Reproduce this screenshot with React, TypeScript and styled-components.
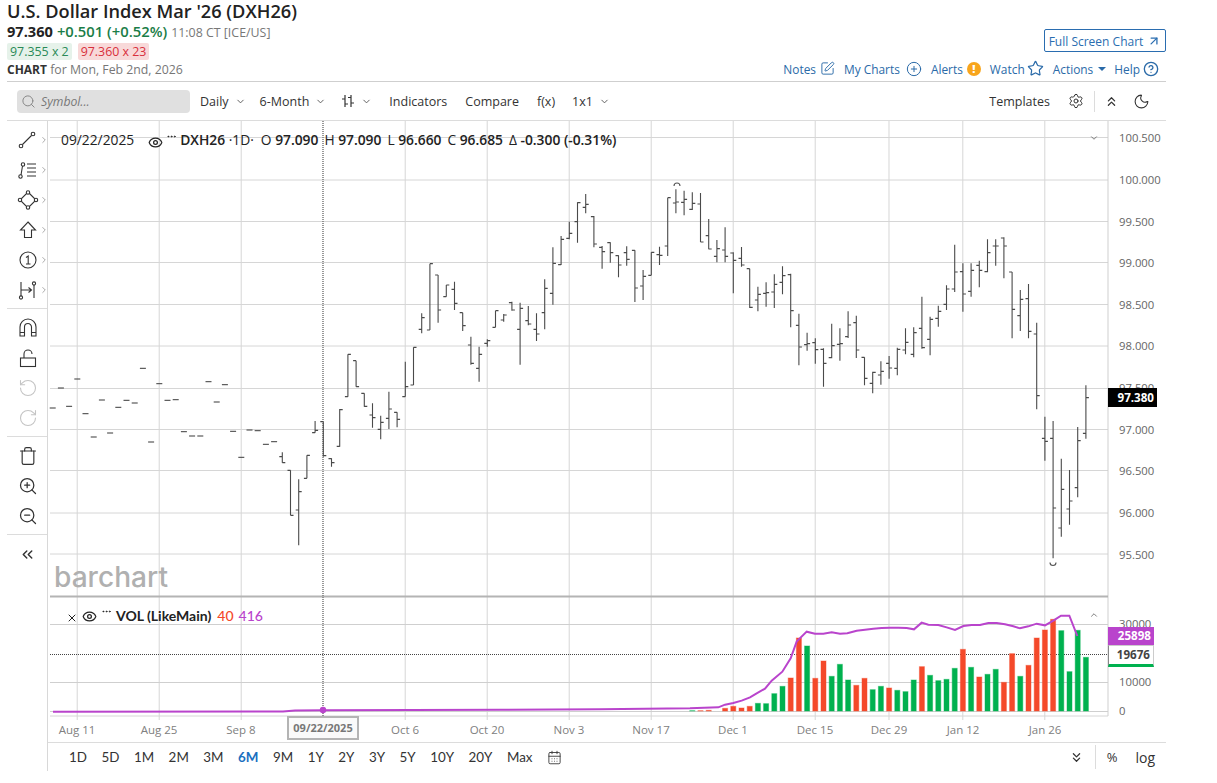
import React from "react";
import styled, { createGlobalStyle } from "styled-components";
import {
  ArrowUpRight, CalendarDays, ChevronDown, ChevronRight, ChevronUp, ChevronsDown, ChevronsLeft, ChevronsUp,
  CircleHelp, CirclePlus, Ellipsis, Eye, Moon, RotateCcw, RotateCw, Search, Settings, SquarePen, Star, Trash, X, ZoomIn, ZoomOut,
} from "lucide-react";

const Global = createGlobalStyle`
  html, body { margin: 0; padding: 0; background: #fff; }
  body { font-family: "Open Sans", "Liberation Sans", sans-serif; color: #333; }
`;

const Page = styled.div`
  width: 1159px;
  margin-left: 7px;
  height: 783px;
  display: flex;
  flex-direction: column;
`;
const Header = styled.header`
  height: 81px;
  border-bottom: 1px solid #cfcfcf;
  display: flex;
  justify-content: space-between;
  flex: none;
`;
const Quote = styled.div`display: flex; flex-direction: column;`;
const Title = styled.h1`
  margin: 0;
  font-size: 18.2px;
  line-height: 23px;
  font-weight: 600;
  color: #222;
`;
const PriceRow = styled.div`display: flex; align-items: baseline; gap: 4px; height: 20px; line-height: 17px;`;
const Last = styled.b`font-size: 14.6px; font-weight: 700; color: #222;`;
const Change = styled.b`font-size: 14.8px; font-weight: 600; color: #1a7d47;`;
const Stamp = styled.span`font-size: 12.4px; color: #777;`;
const Badges = styled.div`display: flex; gap: 6px; height: 17px;`;
const Badge = styled.span<{ $tone: "bid" | "ask" }>`
  font-size: 12.4px;
  line-height: 17px;
  padding: 0 3px;
  border-radius: 2px;
  background: ${(p) => (p.$tone === "bid" ? "#e6f2ea" : "#f8d9d9")};
  color: ${(p) => (p.$tone === "bid" ? "#2a8a57" : "#d8303c")};
`;
const ChartFor = styled.div`font-size: 12.3px; line-height: 20px; color: #777;`;
const ChartWord = styled.b`font-size: 12px; font-weight: 700; color: #333;`;

const HeaderRight = styled.div`display: flex; flex-direction: column; align-items: flex-end; padding-top: 29px;`;
const FullButton = styled.a`
  box-sizing: border-box;
  width: 122px;
  height: 23px;
  padding-top: 1px;
  border: 1px solid #2a6db0;
  border-radius: 2px;
  display: flex;
  align-items: center;
  justify-content: center;
  gap: 4px;
  font-size: 12px;
  color: #2a6db0;
`;
const Nav = styled.nav`display: flex; align-items: center; gap: 9px; margin-top: 7px; padding-right: 7px; height: 19px;`;
const NavItem = styled.a<{ $gap?: number; $ml?: number }>`
  display: flex;
  align-items: center;
  gap: ${(p) => p.$gap ?? 4}px;
  margin-left: ${(p) => p.$ml ?? 0}px;
  font-size: 11.9px;
  color: #2a6aa8;
`;
const AlertDot = styled.span`
  width: 14px;
  height: 14px;
  border-radius: 50%;
  background: #f8a51c;
  color: #fff;
  font-size: 11px;
  font-weight: 800;
  line-height: 14px;
  text-align: center;
`;
const Caret = styled.span`
  width: 0;
  height: 0;
  margin-left: 1px;
  border-left: 4px solid transparent;
  border-right: 4px solid transparent;
  border-top: 4px solid #2a6aa8;
`;

const Toolbar = styled.div`
  height: 38px;
  border-bottom: 1px solid #dcdcdc;
  display: flex;
  align-items: center;
  justify-content: space-between;
  padding: 0 16px 0 10px;
  flex: none;
`;
const ToolGroup = styled.div`display: flex; align-items: center; gap: 14px;`;
const SearchBox = styled.div`
  width: 173px;
  height: 23px;
  box-sizing: border-box;
  border-radius: 4px;
  background: #e0e0e0;
  display: flex;
  align-items: center;
  gap: 5px;
  padding-left: 4px;
  margin-right: -4px;
  font-size: 12.2px;
  font-style: italic;
  color: #777;
`;
const ToolItem = styled.span<{ $ml?: number; $mr?: number }>`
  display: flex;
  align-items: center;
  gap: 6px;
  margin-left: ${(p) => p.$ml ?? 0}px;
  margin-right: ${(p) => p.$mr ?? 0}px;
  font-size: 12.5px;
  color: #333;
`;
const VRule = styled.span`width: 1px; height: 21px; background: #dcdcdc; margin: 0 -5px 0 -4px;`;

const Body = styled.div`display: flex; flex: none; height: 650px;`;
const Rail = styled.aside`
  width: 40px;
  flex: none;
  border-right: 1px solid #d8d8d8;
  display: flex;
  flex-direction: column;
  padding-top: 4px;
`;
const RailGroup = styled.div`
  display: flex;
  flex-direction: column;
  padding-bottom: 3px;
  margin-bottom: 4px;
  border-bottom: 1px solid #dcdcdc;
  &:last-child { border-bottom: 0; }
`;
const RailBtn = styled.div<{ $dim?: boolean }>`
  height: 30px;
  display: flex;
  align-items: center;
  justify-content: center;
  padding-left: 1px;
  position: relative;
  color: ${(p) => (p.$dim ? "#c4c4c4" : "#333")};
`;
const RailMore = styled.span`position: absolute; left: 32px; top: 10px; color: #9a9a9a; display: flex;`;

const Main = styled.div`flex: 1; display: flex; flex-direction: column; min-width: 0;`;
const ChartBox = styled.div`position: relative; height: 621px; flex: none;`;
const ChartSvg = styled.svg`display: block;`;
const AxisText = styled.text`font-family: "Open Sans", sans-serif; font-size: 11.3px; fill: #666;`;
const DateText = styled.text`font-family: "Open Sans", sans-serif; font-size: 11.5px; fill: #808080; text-anchor: middle;`;
const Logo = styled.text`font-family: "Inter", sans-serif; font-size: 28px; font-weight: 500; fill: #b0b0b0;`;

const Legend = styled.div<{ $top: number; $left: number }>`
  position: absolute;
  top: ${(p) => p.$top}px;
  left: ${(p) => p.$left}px;
  height: 18px;
  display: flex;
  align-items: center;
  white-space: nowrap;
  font-size: 13.8px;
  color: #222;
`;
const LegendB = styled.b<{ $gap?: number }>`font-weight: 600; margin-left: ${(p) => p.$gap ?? 0}px;`;
const LegendT = styled.span<{ $gap?: number }>`margin-left: ${(p) => p.$gap ?? 0}px;`;
const LegendIcon = styled.span<{ $gap?: number; $shift?: number }>`
  display: flex;
  margin-left: ${(p) => p.$gap ?? 0}px;
  transform: translateY(${(p) => p.$shift ?? 0}px);
`;
const VolName = styled.b`font-family: "Lato", sans-serif; font-size: 14px; font-weight: 700; margin-left: 4px;`;
const VolValue = styled.span<{ $color: string; $gap: number }>`
  font-family: "Lato", sans-serif;
  font-size: 14px;
  font-weight: 500;
  margin-left: ${(p) => p.$gap}px;
  color: ${(p) => p.$color};
`;
const Tag = styled.div<{ $top: number; $height: number; $bg: string; $fg: string; $w: number; $edge?: string }>`
  position: absolute;
  left: 1060px;
  top: ${(p) => p.$top}px;
  width: ${(p) => p.$w}px;
  height: ${(p) => p.$height}px;
  box-sizing: border-box;
  background: ${(p) => p.$bg};
  color: ${(p) => p.$fg};
  font-size: 11.6px;
  font-weight: 700;
  line-height: ${(p) => p.$height}px;
  text-align: right;
  padding-right: 3px;
  ${(p) => (p.$edge ? `border: 1px solid #ccc; border-left-color:#888; border-bottom: 3px solid ${p.$edge}; line-height: ${p.$height - 4}px;` : "")}
`;
const DateTag = styled.div`
  position: absolute;
  left: 239px;
  top: 595px;
  width: 72px;
  height: 24px;
  box-sizing: border-box;
  border: 2px solid #b4b4b4;
  background: #fafafa;
  color: #777;
  font-size: 11px;
  font-weight: 700;
  line-height: 19px;
  text-align: center;
`;
const Corner = styled.span<{ $top: number }>`position: absolute; left: 1041px; top: ${(p) => p.$top}px; color: #666; display: flex;`;

const RangeBar = styled.div`
  height: 28px;
  border-top: 1px solid #dcdcdc;
  display: flex;
  align-items: center;
  justify-content: space-between;
  padding: 0 11px 0 21px;
  flex: none;
`;
const RangeGroup = styled.div`display: flex; align-items: center; gap: 14.5px;`;
const RangeItem = styled.span<{ $on?: boolean }>`
  font-family: "Lato", sans-serif;
  font-size: 13.4px;
  font-weight: ${(p) => (p.$on ? 700 : 400)};
  color: ${(p) => (p.$on ? "#1a6fc0" : "#333")};
`;
const RangeRight = styled.div`display: flex; align-items: center; color: #333; font-size: 13px;`;
const RangeDivider = styled.span`width: 1px; height: 24px; background: #dcdcdc; margin: 0 11px;`;
const LogText = styled.span`margin-left: 18px; font-size: 14px;`;

const x = (i: number) => 52.7 + 8.2 * i;
const VX = [77.3, 159.3, 241.3, 405.3, 487.3, 569.3, 651.3, 733.3, 815.3, 889, 962.7, 1044.7];
const HY = [137.5, 180, 221.5, 262.5, 304.5, 346, 388.5, 429.5, 470.5, 513, 554];
const PRICE: [string, number][] = [["100.500", 138], ["100.000", 180], ["99.500", 222], ["99.000", 263], ["98.500", 305], ["98.000", 346], ["97.500", 388], ["97.000", 430], ["96.500", 471], ["96.000", 513], ["95.500", 555]];
const DATES: [string, number][] = [["Aug 11", 77], ["Aug 25", 159], ["Sep 8", 241], ["Oct 6", 405], ["Oct 20", 487], ["Nov 3", 569], ["Nov 17", 651], ["Dec 1", 733], ["Dec 15", 815], ["Dec 29", 889], ["Jan 12", 963], ["Jan 26", 1045]];

type B = [number, number, number, number];
const seg = (base: number, a: number[][]): B[] => a.map((r) => r.map((v) => base + v / 3) as B);
const flats = [204, 144, 199, 117, 221, 291, 180, 279, 202, 181, 189, 85, 306, 131, 181, 179, 275, 288, 288, 125, 186, 134, 274, 352, 270, 272, 313, 305];
const BARS: B[] = [
  ...seg(340, flats.map((v) => [v, v, v, v])),
  ...seg(340, [[337, 368, 350, 368], [391, 526, 391, 526], [418, 616, 510, 455], [346, 415, 415, 346], [243, 278, 278, 271], [245, 350, 245, 347], [355, 380, 356, 368]]),
  ...seg(385, [[72, 185, 184, 74]]),
  ...seg(170, [[553, 680, 680, 553], [572, 650, 572, 650]]),
  ...seg(385, [[25, 65, 25, 64], [55, 128, 90, 98], [92, 163, 133, 112], [20, 132, 100, 72], [82, 127, 82, 103]]),
  ...seg(170, [[575, 680, 680, 650], [532, 645, 645, 532], [430, 490, 478, 443], [281, 480, 480, 281], [315, 458, 315, 420], [345, 380, 380, 345], [335, 420, 358, 400], [428, 483, 428, 467], [500, 584, 525, 580], [530, 635, 595, 553], [508, 530, 520, 512], [422, 472, 472, 422], [432, 455, 450, 435], [395, 422, 398, 420], [398, 584, 478, 415], [408, 466, 452, 462], [430, 513, 478, 492], [328, 478, 428, 355], [232, 404, 370, 280], [198, 285, 284, 208], [155, 208, 205, 190], [97, 218, 155, 98], [72, 130, 112, 103], [138, 232, 140, 222], [228, 296, 232, 245], [217, 278, 218, 248], [256, 322, 257, 285], [229, 287, 248, 268], [241, 396, 241, 354]]),
  ...seg(170, [[300, 390, 348, 319], [247, 316, 316, 247], [230, 285, 254, 256], [83, 258, 228, 83], [58, 130, 99, 96], [62, 136, 97, 88], [67, 120, 118, 100], [69, 216, 102, 216], [147, 238, 197, 237], [210, 277, 259, 236], [172, 277, 240, 259], [247, 370, 249, 271], [231, 290, 265, 285], [296, 414, 296, 412], [350, 424, 390, 373], [337, 410, 370, 368], [313, 414, 366, 343], [289, 373, 337, 317], [311, 472, 314, 422], [431, 586, 466, 531], [488, 542, 524, 521], [505, 581, 518, 539], [535, 650, 538, 580], [461, 565, 563, 527], [475, 572, 523, 521], [424, 504, 500, 465], [437, 564, 458, 540], [562, 646, 562, 625], [605, 670, 640, 607]]),
  ...seg(220, [[424, 494, 465, 454], [408, 476, 430, 444], [383, 466, 445, 388], [325, 403, 390, 367], [322, 412, 403, 338], [230, 386, 325, 383], [290, 406, 358, 298], [257, 320, 295, 274], [196, 270, 253, 207], [74, 216, 207, 156], [130, 275, 155, 222], [130, 230, 214, 151], [122, 202, 136, 151], [58, 157, 155, 98], [58, 137, 78, 78], [52, 175, 54, 78], [156, 355, 156, 268], [210, 333, 287, 238], [192, 355, 236, 334], [308, 568, 342, 527], [590, 722, 655, 664], [603, 1015, 655, 864], [716, 950, 924, 808], [750, 914, 867, 843], [621, 832, 803, 662], [496, 656, 640, 533]]),
];
const RED = "#f4492a";
const GREEN = "#00b14f";
const VOL: [number, string][] = [
  [302, GREEN], [302, RED], [301, RED], [303, GREEN],
  [295, RED], [289, RED], [294, RED], [289, RED], [280, GREEN], [281, GREEN], [251, GREEN], [229, GREEN], [204, RED], [84, RED], [108, GREEN], [205, RED], [153, RED], [199, GREEN], [163, GREEN], [210, GREEN], [226, RED], [205, RED], [239, GREEN], [229, GREEN], [234, RED], [241, GREEN], [245, GREEN], [210, GREEN], [170, RED], [196, GREEN], [212, GREEN], [208, GREEN], [175, GREEN], [118, RED], [172, GREEN], [201, RED], [193, GREEN], [178, GREEN], [217, RED], [131, RED], [199, GREEN], [166, RED], [84, RED], [60, RED], [28, RED], [62, GREEN], [185, GREEN], [61, GREEN], [142, GREEN],
];
const LINE = [[0, 295], [85, 292], [105, 284], [130, 279], [155, 272], [180, 262], [200, 250], [225, 236], [245, 212], [277, 185], [302, 145], [320, 95], [350, 65], [375, 71], [400, 71], [425, 67], [450, 71], [472, 70], [500, 62], [525, 59], [550, 56], [575, 54], [600, 53], [625, 53], [650, 54], [672, 58], [695, 38], [715, 44], [745, 45], [770, 52], [795, 60], [820, 48], [845, 45], [870, 45], [895, 39], [920, 39], [945, 43], [970, 49], [990, 55], [1015, 49], [1040, 41], [1065, 46], [1090, 32], [1113, 17], [1138, 17], [1162, 78]];
const linePoints = "53,711.7 283,711.5 295,710.5 323,710.3 500,709.8 600,709.2 " + LINE.map(([a, b]) => `${690 + a / 3},${610 + b / 3}`).join(" ");

const Ico: React.FC<{ children: React.ReactNode }> = ({ children }) => (
  <svg width="22" height="22" viewBox="0 0 22 22" fill="none" stroke="currentColor" strokeWidth="1.1">{children}</svg>
);
const More = () => <RailMore><ChevronRight size={10} /></RailMore>;

const ToolCol = () => (
  <Rail>
    <RailGroup>
      <RailBtn><Ico><circle cx="4" cy="17" r="1.8" /><circle cx="16" cy="5" r="1.8" /><path d="M5.5 15.5 14.5 6.5" /></Ico><More /></RailBtn>
      <RailBtn><Ico><circle cx="3.5" cy="17.5" r="1.7" /><circle cx="6" cy="5.5" r="1.7" /><path d="M5.5 7 4 16M10 5h9M10 9h9M10 13h9M10 17h9" /></Ico><More /></RailBtn>
      <RailBtn><Ico><path d="M11 3 19 11 11 19 3 11Z" /><circle cx="11" cy="3.5" r="1.7" fill="#fff" /><circle cx="3" cy="11" r="1.7" fill="#fff" /><circle cx="19" cy="11" r="1.7" fill="#fff" /><circle cx="11" cy="18.5" r="1.7" fill="#fff" /></Ico><More /></RailBtn>
      <RailBtn><Ico><path d="M11 3 18.5 11H14.5V18.5H7.5V11H3.5Z" /></Ico><More /></RailBtn>
      <RailBtn><Ico><circle cx="11" cy="11" r="8" /><path d="M9 8.5 11.2 7V15M9 15h4.5" /></Ico><More /></RailBtn>
      <RailBtn><Ico><path d="M4 3V17M4 11H14M11.5 8.5 14.5 11 11.5 13.5M17 6V19" /><circle cx="4" cy="18.5" r="1.6" /><circle cx="17" cy="4.5" r="1.6" /></Ico><More /></RailBtn>
    </RailGroup>
    <RailGroup>
      <RailBtn><Ico><path d="M3 19V10a8 8 0 0 1 16 0V19H14.5V10a3.5 3.5 0 0 0-7 0V19ZM3 15.5H7.5M14.5 15.5H19" /></Ico></RailBtn>
      <RailBtn><Ico><rect x="3.5" y="11" width="15" height="8.5" /><path d="M7 11V7a4 4 0 0 1 8 0" /></Ico></RailBtn>
      <RailBtn $dim><RotateCcw size={20} strokeWidth={1.3} /></RailBtn>
      <RailBtn $dim><RotateCw size={20} strokeWidth={1.3} /></RailBtn>
    </RailGroup>
    <RailGroup>
      <RailBtn><Trash size={20} strokeWidth={1.4} /></RailBtn>
      <RailBtn><ZoomIn size={20} strokeWidth={1.5} /></RailBtn>
      <RailBtn><ZoomOut size={20} strokeWidth={1.5} /></RailBtn>
    </RailGroup>
    <RailGroup>
      <RailBtn><ChevronsLeft size={17} strokeWidth={2} /></RailBtn>
    </RailGroup>
  </Rail>
);

const Chart = () => (
  <ChartBox>
    <ChartSvg width="1118" height="621" viewBox="48 121 1118 621">
      <g stroke="#e2e2e2" strokeWidth="1.4">
        {VX.map((v) => <line key={v} x1={v} x2={v} y1={121} y2={720} />)}
      </g>
      <g stroke="#d6d6d6" strokeWidth="1">
        {HY.map((v) => <line key={v} x1={50} x2={1108} y1={v} y2={v} />)}
        {[624.5, 682.5].map((v) => <line key={v} x1={50} x2={1108} y1={v} y2={v} stroke="#cfcfcf" />)}
        <line x1={50} x2={1108} y1={711.5} y2={711.5} stroke="#cfcfcf" />
        <line x1={50} x2={1108} y1={716} y2={716} />
        <line x1={1108} x2={1108} y1={121} y2={716} stroke="#cfcfcf" />
      </g>
      <line x1={50} x2={1108} y1={596.5} y2={596.5} stroke="#b4b4b4" strokeWidth="2" />
      <line x1={50} x2={1108} y1={654.5} y2={654.5} stroke="#444" strokeDasharray="1 1" />
      <line x1={323} x2={323} y1={121} y2={716} stroke="#777" strokeDasharray="1 1" strokeWidth="1.5" />
      <Logo x={54} y={587} textLength={114} lengthAdjust="spacingAndGlyphs">barchart</Logo>
      <g stroke="#4a4a4a" strokeWidth="1.1" fill="none">
        {BARS.map(([hi, lo, o, c], i) => hi === lo
          ? <line key={i} x1={x(i) - 3} x2={x(i) + 3} y1={o} y2={o} />
          : <path key={i} d={`M${x(i)} ${hi}V${lo}M${x(i) - 3} ${o}H${x(i)}M${x(i)} ${c}H${x(i) + 3}`} />)}
        <path d="M674 186a3 3 0 0 1 6 0M1050 562.5a3 3 0 0 0 6 0" stroke="#555" />
      </g>
      {VOL.map(([t, col], k) => {
        const px = x(78 + k);
        const top = 610 + t / 3;
        return <rect key={k} x={px - 2.5} y={top} width={5} height={711 - top} fill={col} stroke={col} strokeOpacity="0.45" />;
      })}
      <polyline points={linePoints} fill="none" stroke="#b944cc" strokeWidth="2" />
      <circle cx={323} cy={710} r={3.2} fill="#b944cc" />
      {PRICE.map(([t, y]) => <AxisText key={t} x={1119} y={y + 4}>{t}</AxisText>)}
      <AxisText x={1119} y={628}>30000</AxisText>
      <AxisText x={1119} y={686}>10000</AxisText>
      <AxisText x={1119} y={715}>0</AxisText>
      {DATES.map(([t, v]) => <DateText key={t} x={v} y={734}>{t}</DateText>)}
    </ChartSvg>
    <Legend $top={9} $left={13}>
      <LegendT>09/22/2025</LegendT>
      <LegendIcon $gap={14} $shift={3}><Eye size={15} strokeWidth={2} /></LegendIcon>
      <LegendIcon $gap={3} $shift={-3}><Ellipsis size={11} strokeWidth={2} /></LegendIcon>
      <LegendB $gap={3}>DXH26</LegendB>
      <LegendT>&nbsp;·1D·</LegendT>
      <LegendT $gap={7}>O <LegendB>97.090</LegendB></LegendT>
      <LegendT $gap={6}>H <LegendB>97.090</LegendB></LegendT>
      <LegendT $gap={6}>L <LegendB>96.660</LegendB></LegendT>
      <LegendT $gap={6}>C <LegendB>96.685</LegendB></LegendT>
      <LegendT $gap={6}>Δ <LegendB>-0.300</LegendB> <LegendB>(-0.31%)</LegendB></LegendT>
    </Legend>
    <Corner $top={12}><ChevronDown size={10} /></Corner>
    <Legend $top={485} $left={18}>
      <LegendIcon $shift={3}><X size={12} strokeWidth={2} /></LegendIcon>
      <LegendIcon $gap={4} $shift={1}><Eye size={15} strokeWidth={2} /></LegendIcon>
      <LegendIcon $gap={4} $shift={-4}><Ellipsis size={11} strokeWidth={2} /></LegendIcon>
      <VolName>VOL (LikeMain)</VolName>
      <VolValue $gap={6} $color="#f4492a">40</VolValue>
      <VolValue $gap={5} $color="#b944cc">416</VolValue>
    </Legend>
    <Corner $top={489}><ChevronUp size={10} /></Corner>
    <Tag $top={267} $height={19} $w={49} $bg="#000" $fg="#fff">97.380</Tag>
    <Tag $top={506} $height={18} $w={46} $bg="#b944cc" $fg="#fff">25898</Tag>
    <Tag $top={524} $height={22} $w={46} $bg="#fff" $fg="#444" $edge="#00b14f">19676</Tag>
    <DateTag>09/22/2025</DateTag>
  </ChartBox>
);

export default function App() {
  return (
    <>
      <Global />
      <Page>
        <Header>
          <Quote>
            <Title>U.S. Dollar Index Mar '26 (DXH26)</Title>
            <PriceRow>
              <Last>97.360</Last>
              <Change>+0.501 (+0.52%)</Change>
              <Stamp>11:08 CT [ICE/US]</Stamp>
            </PriceRow>
            <Badges>
              <Badge $tone="bid">97.355 x 2</Badge>
              <Badge $tone="ask">97.360 x 23</Badge>
            </Badges>
            <ChartFor><ChartWord>CHART</ChartWord> for Mon, Feb 2nd, 2026</ChartFor>
          </Quote>
          <HeaderRight>
            <FullButton>Full Screen Chart <ArrowUpRight size={14} strokeWidth={2.2} /></FullButton>
            <Nav>
              <NavItem>Notes <SquarePen size={15} strokeWidth={1.5} /></NavItem>
              <NavItem $gap={6}>My Charts <CirclePlus size={16} strokeWidth={1.5} /></NavItem>
              <NavItem>Alerts <AlertDot>!</AlertDot></NavItem>
              <NavItem $gap={2}>Watch <Star size={17} strokeWidth={1.7} /></NavItem>
              <NavItem>Actions <Caret /></NavItem>
              <NavItem $gap={3} $ml={-1}>Help <CircleHelp size={16} strokeWidth={2} /></NavItem>
            </Nav>
          </HeaderRight>
        </Header>
        <Toolbar>
          <ToolGroup>
            <SearchBox><Search size={15} strokeWidth={1.6} color="#888" />Symbol...</SearchBox>
            <ToolItem>Daily <ChevronDown size={11} color="#555" /></ToolItem>
            <ToolItem>6-Month <ChevronDown size={11} color="#555" /></ToolItem>
            <ToolItem $ml={1}>
              <svg width="14" height="14" viewBox="0 0 14 14" fill="none" stroke="#333" strokeWidth="1.2"><path d="M4 1V13M1 5H4M4 10H7M10 1V13M7 3.5H10M10 9H13" /></svg>
              <ChevronDown size={11} color="#555" />
            </ToolItem>
            <ToolItem $ml={3}>Indicators</ToolItem>
            <ToolItem $ml={4}>Compare</ToolItem>
            <ToolItem $ml={4}>f(x)</ToolItem>
            <ToolItem $ml={3}>1x1 <ChevronDown size={11} color="#555" /></ToolItem>
          </ToolGroup>
          <ToolGroup>
            <ToolItem $mr={4}>Templates</ToolItem>
            <Settings size={16} strokeWidth={1.5} />
            <VRule />
            <ChevronsUp size={15} strokeWidth={2} />
            <Moon size={17} strokeWidth={1.5} />
          </ToolGroup>
        </Toolbar>
        <Body>
          <ToolCol />
          <Main>
            <Chart />
            <RangeBar>
              <RangeGroup>
                {["1D", "5D", "1M", "2M", "3M", "6M", "9M", "1Y", "2Y", "3Y", "5Y", "10Y", "20Y", "Max"].map((r) => (
                  <RangeItem key={r} $on={r === "6M"}>{r}</RangeItem>
                ))}
                <CalendarDays size={15} strokeWidth={1.4} color="#333" />
              </RangeGroup>
              <RangeRight>
                <ChevronsDown size={15} strokeWidth={2} />
                <RangeDivider />
                %
                <LogText>log</LogText>
              </RangeRight>
            </RangeBar>
          </Main>
        </Body>
      </Page>
    </>
  );
}
